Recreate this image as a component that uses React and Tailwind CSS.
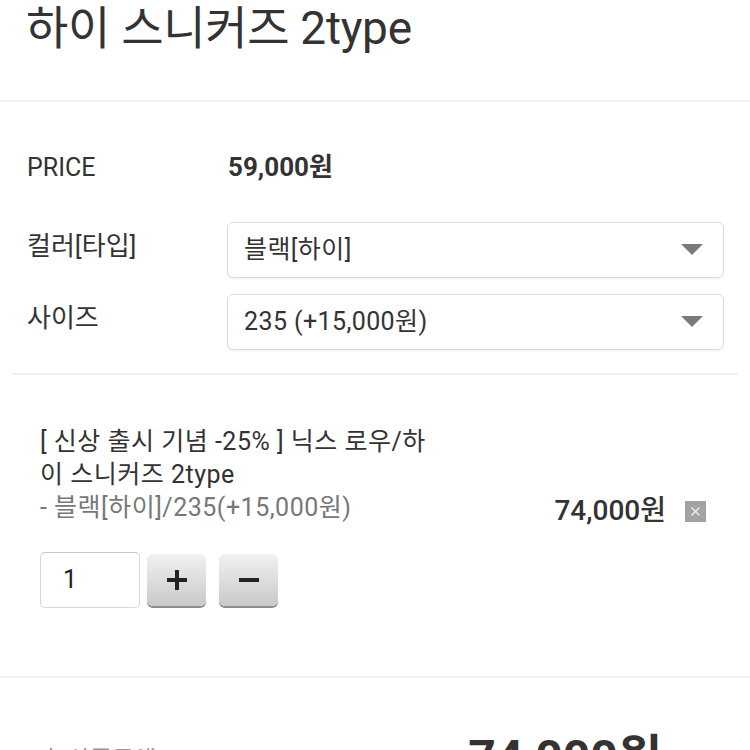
const font = { fontFamily: 'Roboto, "Noto Sans CJK KR", sans-serif' };

function Caret() {
  return (
    <svg width="22" height="12" viewBox="0 0 22 12" className="shrink-0">
      <path d="M0 0 H22 L11 11 Z" fill="#7a7a7a" />
    </svg>
  );
}

function SelectBox({ value }) {
  return (
    <div className="flex h-[56px] flex-1 items-center justify-between rounded-[6px] border border-[#dcdcdc] pl-[16px] pr-[20px] shadow-[0_1px_2px_rgba(0,0,0,0.06)]">
      <span className="text-[25px] tracking-[0.4px] text-[#333]">{value}</span>
      <Caret />
    </div>
  );
}

function StepButton({ plus }) {
  return (
    <div className="flex h-[52px] w-[59px] items-center justify-center rounded-[6px] bg-gradient-to-b from-[#f1f1f1] to-[#c9c9c9] shadow-[0_2px_0_#8c8c8c]">
      <svg width="22" height="22" viewBox="0 0 22 22">
        <rect x="1" y="9" width="20" height="4" fill="#222" />
        {plus && <rect x="9" y="1" width="4" height="20" fill="#222" />}
      </svg>
    </div>
  );
}

export default function App() {
  return (
    <div className="h-[750px] w-[750px] overflow-hidden bg-white text-[#333]" style={font}>
      <div className="pl-[26px] pb-[44px] text-[46px] leading-[56px] tracking-[-0.3px] text-[#333]">
        하이 스니커즈 2type
      </div>
      <div className="h-[2px] w-full bg-[#f3f3f3]" />

      <div className="px-[27px] pt-[46px]">
        <div className="flex items-center">
          <span className="w-[201px] text-[25px] text-[#333]">PRICE</span>
          <span className="text-[26px] font-bold text-[#333]">59,000원</span>
        </div>
      </div>

      <div className="flex flex-col gap-[16px] pl-[27px] pr-[26px] pt-[35px]">
        <div className="flex items-start">
          <span className="w-[200px] pt-[5px] text-[26px] text-[#333]">컬러[타입]</span>
          <SelectBox value="블랙[하이]" />
        </div>
        <div className="flex items-start">
          <span className="w-[200px] pt-[5px] text-[26px] text-[#333]">사이즈</span>
          <SelectBox value="235 (+15,000원)" />
        </div>
      </div>

      <div className="mx-[12px] mt-[23px] h-[2px] bg-[#f1f1f1]" />

      <div className="px-[40px] pt-[50px]">
        <div className="flex items-end justify-between">
          <div className="w-[405px] break-all text-[25px] leading-[33px] tracking-[0.5px]">
            <div className="text-[#333]">[ 신상 출시 기념 -25% ] 닉스 로우/하이 스니커즈 2type</div>
            <div className="text-[#777]">- 블랙[하이]/235(+15,000원)</div>
          </div>
          <div className="mb-[-8px] flex items-center gap-[19px] pr-[4px]">
            <span className="text-[28px] font-medium text-[#333]">74,000원</span>
            <span className="flex h-[21px] w-[21px] items-center justify-center bg-[#a3a3a3]">
              <svg width="11" height="11" viewBox="0 0 11 11">
                <path d="M1.5 1.5 L9.5 9.5 M9.5 1.5 L1.5 9.5" stroke="#e8e8e8" strokeWidth="1.6" />
              </svg>
            </span>
          </div>
        </div>

        <div className="mt-[28px] flex items-center">
          <div className="flex h-[56px] w-[100px] items-center rounded-[5px] border border-[#d8d8d8] border-t-[#c8c8c8] pl-[22px] text-[25px] text-[#222]">
            1
          </div>
          <div className="ml-[7px] flex gap-[13px]">
            <StepButton plus />
            <StepButton />
          </div>
        </div>
      </div>

      <div className="mt-[68px] h-[2px] w-full bg-[#f3f3f3]" />

      <div className="flex items-start justify-between pl-[40px] pr-[88px] pt-[56px]">
        <span className="pt-[8px] text-[24px] text-[#999]">총 상품금액</span>
        <span className="text-[48px] font-bold leading-none text-[#333]">74,000원</span>
      </div>
    </div>
  );
}
